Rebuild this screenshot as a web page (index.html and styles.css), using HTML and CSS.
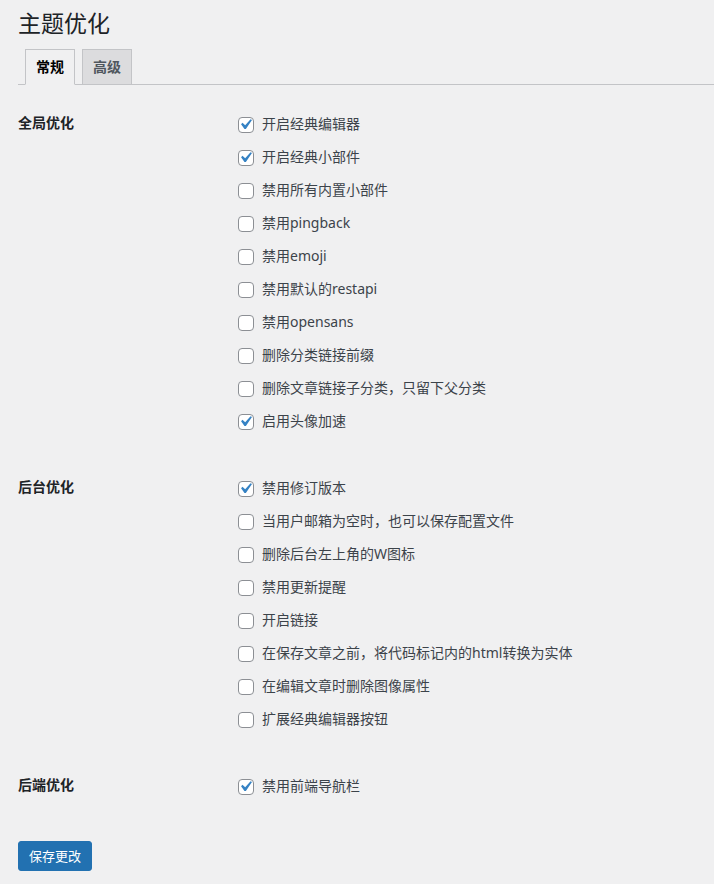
FILE: index.html
```html
<!DOCTYPE html>
<html lang="zh-CN">
<head>
    <meta charset="UTF-8">
    <meta name="viewport" content="width=device-width, initial-scale=1.0">
    <title>主题优化</title>
    <link rel="stylesheet" href="styles.css">
</head>
<body>
    <div class="wrap">
        <h1 class="page-title">主题优化</h1>

        <nav class="nav-tab-wrapper">
            <a class="nav-tab nav-tab-active">常规</a>
            <a class="nav-tab">高级</a>
        </nav>

        <form class="settings-form">
            <div class="form-table">
                <div class="form-row">
                    <div class="row-title">全局优化</div>
                    <div class="options">
                        <label class="option"><span class="box checked"><svg viewBox="0 0 20 20"><path d="M14.83 4.89l1.34.94-5.81 8.38H9.02L5.78 9.67l1.34-1.25 2.57 2.4z"/></svg></span>开启经典编辑器</label>
                        <label class="option"><span class="box checked"><svg viewBox="0 0 20 20"><path d="M14.83 4.89l1.34.94-5.81 8.38H9.02L5.78 9.67l1.34-1.25 2.57 2.4z"/></svg></span>开启经典小部件</label>
                        <label class="option"><span class="box"></span>禁用所有内置小部件</label>
                        <label class="option"><span class="box"></span>禁用pingback</label>
                        <label class="option"><span class="box"></span>禁用emoji</label>
                        <label class="option"><span class="box"></span>禁用默认的restapi</label>
                        <label class="option"><span class="box"></span>禁用opensans</label>
                        <label class="option"><span class="box"></span>删除分类链接前缀</label>
                        <label class="option"><span class="box"></span>删除文章链接子分类，只留下父分类</label>
                        <label class="option"><span class="box checked"><svg viewBox="0 0 20 20"><path d="M14.83 4.89l1.34.94-5.81 8.38H9.02L5.78 9.67l1.34-1.25 2.57 2.4z"/></svg></span>启用头像加速</label>
                    </div>
                </div>

                <div class="form-row">
                    <div class="row-title">后台优化</div>
                    <div class="options">
                        <label class="option"><span class="box checked"><svg viewBox="0 0 20 20"><path d="M14.83 4.89l1.34.94-5.81 8.38H9.02L5.78 9.67l1.34-1.25 2.57 2.4z"/></svg></span>禁用修订版本</label>
                        <label class="option"><span class="box"></span>当用户邮箱为空时，也可以保存配置文件</label>
                        <label class="option"><span class="box"></span>删除后台左上角的W图标</label>
                        <label class="option"><span class="box"></span>禁用更新提醒</label>
                        <label class="option"><span class="box"></span>开启链接</label>
                        <label class="option"><span class="box"></span>在保存文章之前，将代码标记内的html转换为实体</label>
                        <label class="option"><span class="box"></span>在编辑文章时删除图像属性</label>
                        <label class="option"><span class="box"></span>扩展经典编辑器按钮</label>
                    </div>
                </div>

                <div class="form-row">
                    <div class="row-title">后端优化</div>
                    <div class="options">
                        <label class="option"><span class="box checked"><svg viewBox="0 0 20 20"><path d="M14.83 4.89l1.34.94-5.81 8.38H9.02L5.78 9.67l1.34-1.25 2.57 2.4z"/></svg></span>禁用前端导航栏</label>
                    </div>
                </div>
            </div>

            <p class="submit">
                <button type="button" class="button-primary">保存更改</button>
            </p>
        </form>
    </div>
</body>
</html>
```

FILE: styles.css
```css
* {
    margin: 0;
    padding: 0;
    box-sizing: border-box;
}

body {
    background: #f0f0f1;
    color: #3c434a;
    font-family: "Noto Sans", "Noto Sans CJK SC", sans-serif;
    font-size: 14px;
    line-height: 20px;
}

.wrap {
    padding: 0 0 0 18px;
}

.page-title {
    font-size: 23px;
    font-weight: 400;
    line-height: 30px;
    color: #1d2327;
    padding: 8px 0 11px;
}

/* tabs */
.nav-tab-wrapper {
    display: flex;
    gap: 7px;
    padding-left: 7px;
    border-bottom: 1px solid #c3c4c7;
}

.nav-tab {
    display: block;
    padding: 5px 10px;
    margin-bottom: -1px;
    font-size: 14px;
    font-weight: 600;
    line-height: 24px;
    color: #50575e;
    background: #dcdcde;
    border: 1px solid #c3c4c7;
    height: 36px;
}

.nav-tab-active {
    background: #f0f0f1;
    color: #000;
    border-bottom-color: #f0f0f1;
}

/* settings table */
.form-table {
    display: flex;
    flex-direction: column;
    gap: 23px;
    margin-top: 5px;
    padding-bottom: 45px;
}

.form-row {
    display: grid;
    grid-template-columns: 220px 1fr;
    padding-top: 24px;
}

.row-title {
    font-weight: 600;
    color: #1d2327;
    margin-top: -1px;
}

.options {
    display: flex;
    flex-direction: column;
    gap: 13px;
}

.option {
    display: flex;
    align-items: center;
    gap: 8px;
    height: 20px;
}

.box {
    position: relative;
    flex: none;
    width: 16px;
    height: 16px;
    margin-top: 1px;
    background: #fff;
    border: 1px solid #8c8f94;
    border-radius: 4px;
}

.box svg {
    position: absolute;
    top: -4px;
    left: -4px;
    width: 21px;
    height: 21px;
    fill: #3582c4;
}

/* submit */
.submit {
    padding: 0;
}

.button-primary {
    font-family: "Noto Sans CJK SC", sans-serif;
    font-size: 13px;
    line-height: 28px;
    padding: 0 10px;
    color: #fff;
    background: #2271b1;
    border: 1px solid #2271b1;
    border-radius: 3px;
}
```
